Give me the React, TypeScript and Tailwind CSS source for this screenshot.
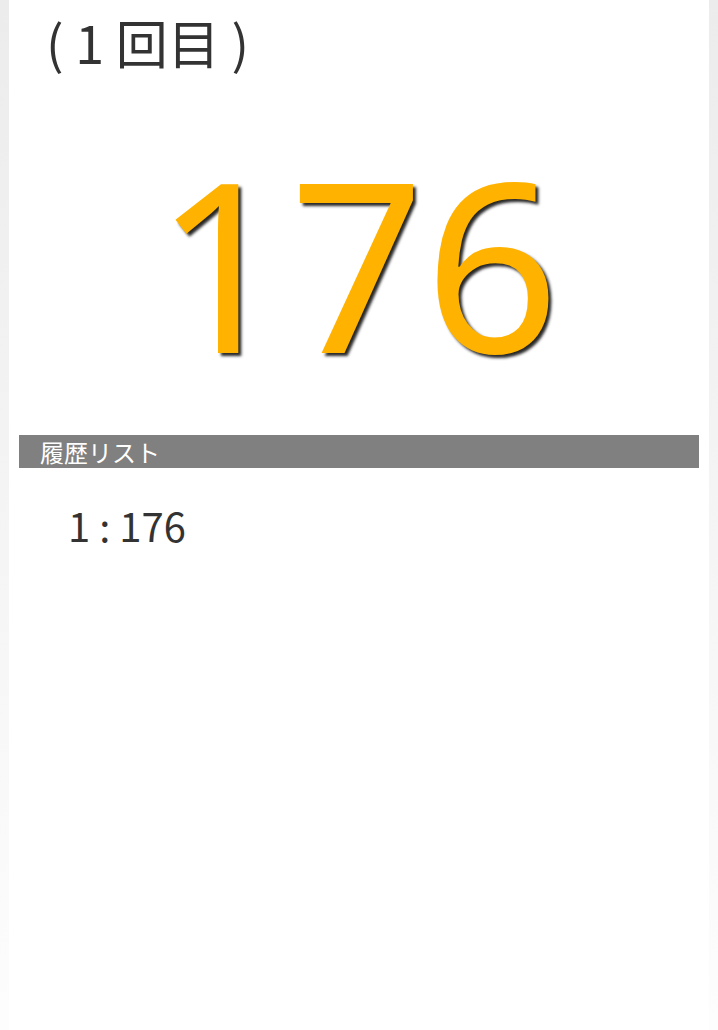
export default function App() {
  const history = [176];
  const current = history[history.length - 1];

  return (
    <div className="h-[1030px] w-full overflow-hidden bg-gradient-to-b from-[#ececec] to-[#fdfdfd]">
      <div className="mx-[9px] flex h-full flex-col bg-white">
        <div className="h-[70px] pl-[37px] pt-[12px] font-['Noto_Sans_CJK_JP',sans-serif] text-[52px] leading-[60px] text-[#333333]">
          ( 1 回目 )
        </div>

        <div className="h-[365px] pt-[74px] pr-[4px] text-center font-['Noto_Sans','Open_Sans',sans-serif] text-[236px] leading-none text-[#ffb300] [text-shadow:3px_3px_3px_rgba(0,0,0,0.85)]">
          {current}
        </div>

        <div className="mx-[10px] h-[33px] bg-[#808080] pl-[21px] font-['Noto_Sans_CJK_JP',sans-serif] text-[24px] leading-[33px] text-white">
          履歴リスト
        </div>

        <ul className="pl-[59px] pt-[32px] font-['Noto_Sans_CJK_JP',sans-serif] text-[#333333]">
          {history.map((v, i) => (
            <li key={i} className="text-[40px] leading-[50px]">
              {i + 1}&nbsp;:&nbsp;{v}
            </li>
          ))}
        </ul>
      </div>
    </div>
  );
}
